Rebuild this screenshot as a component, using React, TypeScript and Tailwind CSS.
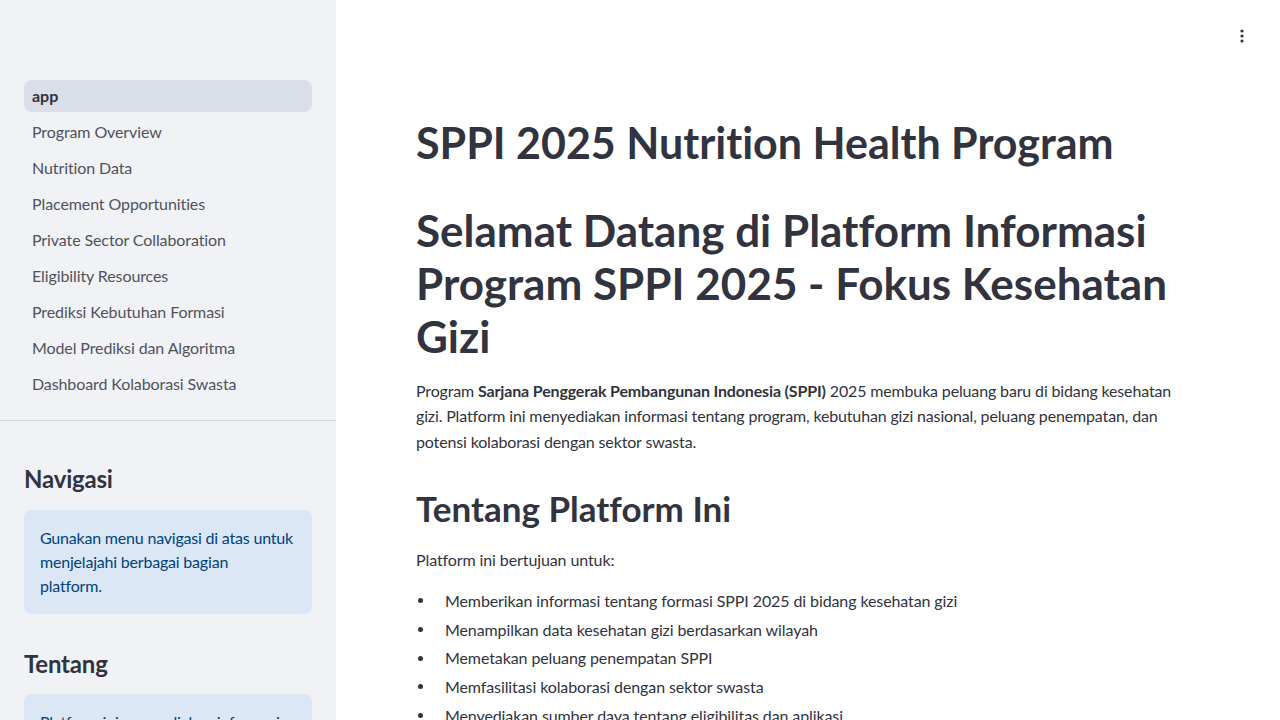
import React from "react";

const navItems = [
  "Program Overview",
  "Nutrition Data",
  "Placement Opportunities",
  "Private Sector Collaboration",
  "Eligibility Resources",
  "Prediksi Kebutuhan Formasi",
  "Model Prediksi dan Algoritma",
  "Dashboard Kolaborasi Swasta",
];

const bullets = [
  "Memberikan informasi tentang formasi SPPI 2025 di bidang kesehatan gizi",
  "Menampilkan data kesehatan gizi berdasarkan wilayah",
  "Memetakan peluang penempatan SPPI",
  "Memfasilitasi kolaborasi dengan sektor swasta",
  "Menyediakan sumber daya tentang eligibilitas dan aplikasi",
];

function Sidebar() {
  return (
    <aside className="w-[336px] shrink-0 h-full bg-[#f0f2f6] overflow-hidden flex flex-col">
      <nav className="pt-[80px] px-6 pb-5 flex flex-col gap-1">
        <div className="h-8 flex items-center px-2 rounded-lg bg-[#dadee8] text-[16px] font-bold text-[#31333f]">
          app
        </div>
        {navItems.map((item) => (
          <div key={item} className="h-8 flex items-center px-2 rounded-lg text-[16px] text-[#50525b] tracking-[-0.1px]">
            {item}
          </div>
        ))}
      </nav>
      <div className="border-t border-[#d5d8de]" />
      <div className="px-6 pt-[44px] flex flex-col">
        <h2 className="text-[24px] leading-[1.2] font-bold text-[#31333f] tracking-[-0.2px]">Navigasi</h2>
        <div className="mt-[16px] rounded-lg bg-[#dbe7f4] px-4 py-4 text-[16px] leading-6 text-[#004280] tracking-[-0.2px]">
          Gunakan menu navigasi di atas untuk menjelajahi berbagai bagian
          <br />
          platform.
        </div>
        <h2 className="mt-[36px] text-[24px] leading-[1.2] font-bold text-[#31333f] tracking-[-0.2px]">Tentang</h2>
        <div className="mt-[15px] rounded-lg bg-[#dbe7f4] px-4 py-4 text-[16px] leading-6 text-[#004280] tracking-[-0.2px]">
          Platform ini menyediakan informasi tentang Program SPPI 2025 dengan fokus pada bidang kesehatan gizi.
        </div>
      </div>
    </aside>
  );
}

function KebabIcon() {
  return (
    <svg width="16" height="16" viewBox="0 0 16 16" className="text-[#31333f]">
      <circle cx="8" cy="3" r="1.6" fill="currentColor" />
      <circle cx="8" cy="8" r="1.6" fill="currentColor" />
      <circle cx="8" cy="13" r="1.6" fill="currentColor" />
    </svg>
  );
}

export default function App() {
  return (
    <div
      className="w-[1280px] h-[720px] flex overflow-hidden bg-white text-[#31333f] [font-variant-ligatures:none]"
      style={{ fontFamily: "Lato, 'Noto Sans', sans-serif" }}
    >
      <Sidebar />
      <main className="flex-1 relative overflow-hidden">
        <div className="absolute top-[28px] right-[30px]">
          <KebabIcon />
        </div>
        <div className="px-20 pt-[117px]">
          <h1 className="text-[43px] leading-[52.8px] font-bold">SPPI 2025 Nutrition Health Program</h1>
          <h1 className="mt-[34px] text-[44px] leading-[53px] font-bold">
            Selamat Datang di Platform Informasi Program SPPI 2025 - Fokus Kesehatan Gizi
          </h1>
          <p className="mt-[15px] text-[16px] leading-[25.6px] tracking-[-0.15px]">
            Program <strong className="font-bold">Sarjana Penggerak Pembangunan Indonesia (SPPI)</strong> 2025 membuka peluang baru di
            bidang kesehatan gizi. Platform ini menyediakan informasi tentang program, kebutuhan gizi nasional, peluang penempatan,
            dan potensi kolaborasi dengan sektor swasta.
          </p>
          <h2 className="mt-[32px] text-[35px] leading-[43px] font-bold">Tentang Platform Ini</h2>
          <p className="mt-[17px] text-[16px] leading-[25.6px] tracking-[-0.1px]">Platform ini bertujuan untuk:</p>
          <ul className="mt-[16px] flex flex-col gap-[3px]">
            {bullets.map((b) => (
              <li key={b} className="flex items-center text-[16px] leading-[25.6px] tracking-[-0.1px]">
                <span className="w-[29px] shrink-0 flex items-center">
                  <span className="ml-[2px] w-[5px] h-[5px] rounded-full bg-[#31333f]" />
                </span>
                <span>{b}</span>
              </li>
            ))}
          </ul>
        </div>
      </main>
    </div>
  );
}
